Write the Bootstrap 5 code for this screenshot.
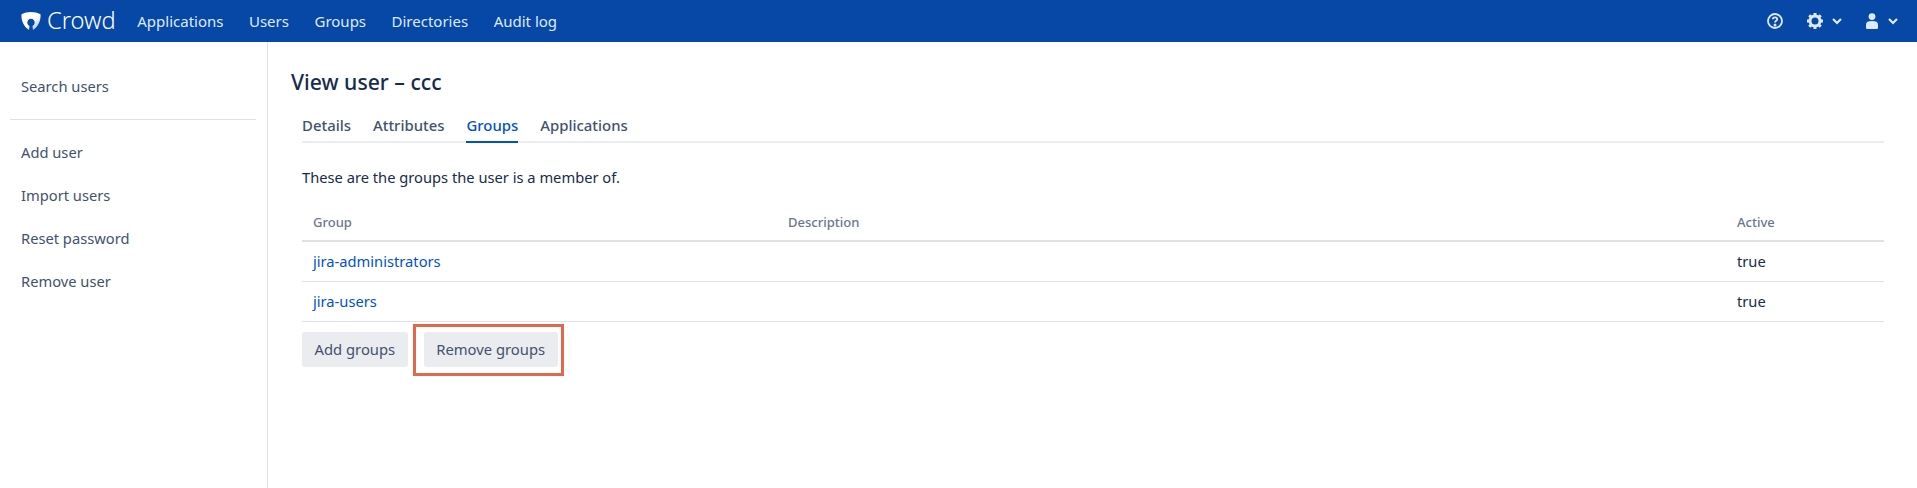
<!DOCTYPE html>
<html lang="en"><head><meta charset="utf-8"><title>View user</title>
<link href="https://cdn.jsdelivr.net/npm/bootstrap@5.3.0/dist/css/bootstrap.min.css" rel="stylesheet">
<style>
html,body{height:100%}
body{font-family:"Noto Sans","Open Sans",sans-serif;font-size:14.7px;color:#172b4d;background:#fff;overflow:hidden}
.topbar{height:42px;background:#0747a6;padding:0 0 0 20px}
.brandmark{color:#fff;font-size:23.700px;font-weight:300;line-height:1;text-decoration:none;gap:5px;margin-right:21.500px}
.toplink{color:#deebff;text-decoration:none;font-size:15px;margin-right:25.500px}
.topicons{color:#deebff;padding-right:19px}
.gearmark{margin:0 7px 0 21px}
.usermark{margin:0 10px 0 24px}
.shellrow{height:446px}
.sidepane{width:268px;border-right:1px solid #dfe1e6;padding:23px 11px 0 10px}
.sidelink{display:block;padding:0 11px;height:43px;line-height:43px;color:#42526e;text-decoration:none}
.sidesep{margin:11px 0 11px;border:0;border-top:1px solid #dfe1e6;opacity:1}
.mainpane{padding:24px 33px 0 23px}
.pagetitle{font-size:21.200px;font-weight:500;margin:0;line-height:32px;color:#172b4d}
.tabstrip{margin:14px 0 0 11px;border-bottom:2px solid #ebecf0;height:31px;gap:22px}
.tablink{font-weight:500;color:#42526e;text-decoration:none;height:31px;line-height:26px;font-size:14.900px}
.tablink.onpage{color:#0052cc;border-bottom:2px solid #0052cc}
.intro{margin:24px 0 0 11px;line-height:20px}
.usergroups{margin:13px 0 0 11px;width:calc(100% - 11px);--bs-table-color:#172b4d;--bs-table-border-color:#dfe1e6}
.usergroups th{font-size:13px;font-weight:500;color:#6b778c;height:41px;padding:6px 11px 0;vertical-align:middle;border-bottom:2px solid #dfe1e6}
.usergroups td{height:40px;padding:0 11px;vertical-align:middle}
.usergroups a{color:#0052cc;text-decoration:none}
.actionrow{margin:10px 0 0 11px;gap:16px}
.btn-soft{background:#ebecf0;color:#42526e;border:0;border-radius:3px;height:35px;padding:0 12.500px;font-size:14.800px}
.annotated{position:relative}
.redframe{position:absolute;left:-11px;right:-6px;top:-8px;bottom:-9px;border:3px solid #e0694c;pointer-events:none}
</style></head><body>
<nav class="topbar d-flex align-items-center">
<a class="brandmark d-flex align-items-center" href="#"><svg width="22" height="20" viewBox="0 0 22 20"><defs><linearGradient id="shieldfade" x1="0.3" y1="0.3" x2="0.9" y2="1"><stop offset="0.4" stop-color="#fff"/><stop offset="1" stop-color="#8fb4e8"/></linearGradient></defs><path fill="url(#shieldfade)" d="M11 1C14.500 1 17.500 1.800 20.500 3.300 21 9.500 18.500 15.500 13 19L12.500 14.900A3.700 3.700 0 1 0 9.500 14.900L9 19C3.500 15.500 1 9.500 1.500 3.300 4.500 1.800 7.500 1 11 1Z"/></svg><span>Crowd</span></a>
<a class="toplink" href="#">Applications</a><a class="toplink" href="#">Users</a><a class="toplink" href="#">Groups</a><a class="toplink" href="#">Directories</a><a class="toplink" href="#">Audit log</a>
<div class="topicons ms-auto d-flex align-items-center">
<svg width="18" height="18" viewBox="0 0 18 18" fill="none" stroke="currentColor" stroke-width="1.800"><circle cx="9" cy="9" r="7"/><path d="M6.800 7.200C6.800 4.800 11.200 4.800 11.200 7.200 11.200 8.800 9 8.800 9 10.500"/><circle cx="9" cy="13" r=".6" fill="currentColor"/></svg>
<svg class="gearmark" width="20" height="20" viewBox="0 0 20 20" fill="none" stroke="currentColor"><circle cx="10" cy="10" r="5" stroke-width="3"/><path stroke-width="3" d="M10 2v2.500M10 15.500V18M2 10h2.500M15.500 10H18M4.300 4.300l1.800 1.800M13.900 13.900l1.800 1.800M4.300 15.700l1.800-1.800M13.900 6.100l1.800-1.800"/></svg><svg width="10" height="8" viewBox="0 0 10 8" fill="none" stroke="currentColor" stroke-width="2.200"><path d="M1 2l4 4 4-4"/></svg>
<svg class="usermark" width="12" height="16" viewBox="0 0 12 16" fill="currentColor"><circle cx="6" cy="3.600" r="3.400"/><path d="M0 11.500C0 9 2 8 6 8s6 1 6 3.500v3C12 15.500 11.400 16 10.500 16h-9C.6 16 0 15.500 0 14.500Z"/></svg><svg width="10" height="8" viewBox="0 0 10 8" fill="none" stroke="currentColor" stroke-width="2.200"><path d="M1 2l4 4 4-4"/></svg>
</div></nav>
<div class="shellrow d-flex">
<aside class="sidepane flex-shrink-0">
<a class="sidelink" href="#">Search users</a>
<hr class="sidesep">
<a class="sidelink" href="#">Add user</a><a class="sidelink" href="#">Import users</a><a class="sidelink" href="#">Reset password</a><a class="sidelink" href="#">Remove user</a>
</aside>
<main class="mainpane flex-grow-1">
<h1 class="pagetitle">View user – ccc</h1>
<div class="tabstrip d-flex"><a class="tablink" href="#">Details</a><a class="tablink" href="#">Attributes</a><a class="tablink onpage" href="#">Groups</a><a class="tablink" href="#">Applications</a></div>
<p class="intro">These are the groups the user is a member of.</p>
<table class="usergroups">
<colgroup><col style="width:475px"><col><col style="width:158px"></colgroup>
<thead><tr><th>Group</th><th>Description</th><th>Active</th></tr></thead>
<tbody><tr class="border-bottom"><td><a href="#">jira-administrators</a></td><td></td><td>true</td></tr>
<tr class="border-bottom"><td><a href="#">jira-users</a></td><td></td><td>true</td></tr></tbody></table>
<div class="actionrow d-flex"><button class="btn-soft">Add groups</button><div class="annotated"><button class="btn-soft">Remove groups</button><span class="redframe"></span></div></div>
</main></div>
<script src="https://cdn.jsdelivr.net/npm/bootstrap@5.3.0/dist/js/bootstrap.bundle.min.js"></script>
</body></html>
